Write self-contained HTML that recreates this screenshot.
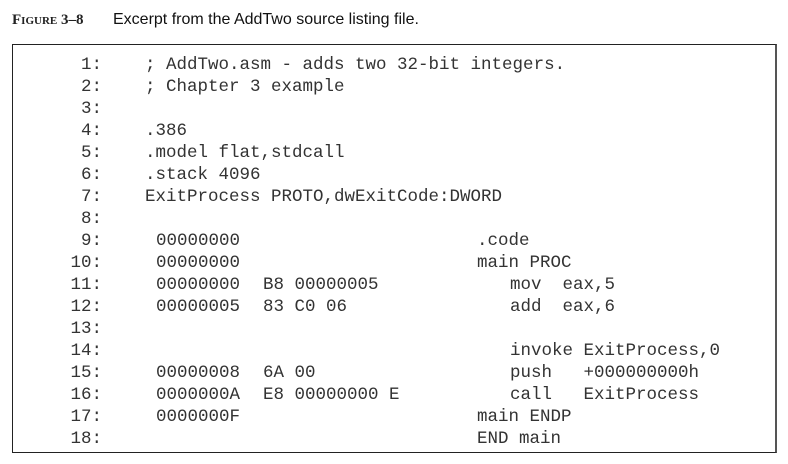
<!DOCTYPE html>
<html><head><meta charset="utf-8"><style>
body{margin:0;width:788px;height:464px;background:#fff;position:relative;overflow:hidden}
.t{position:absolute;top:12px;left:12px;font-family:"Liberation Serif",serif;font-weight:bold;font-size:15px;color:#222}
.t .s{font-size:11px}
.c{position:absolute;top:11px;left:113px;font-family:"Liberation Sans",sans-serif;font-size:16px;color:#111}
.box{position:absolute;left:12px;top:44px;width:765px;height:409px;border:1px solid #222;border-right:2px solid #555;box-sizing:border-box}
.l{position:absolute;font-family:"Liberation Mono",monospace;font-size:17.5px;line-height:22px;color:#333;white-space:pre}
</style></head><body>
<div class="t">F<span class="s">IGURE</span> 3–8</div>
<div class="c">Excerpt from the AddTwo source listing file.</div>
<div class="box"></div>
<div class="l" style="left:58px;top:54px;width:44px;text-align:right"> 1:
 2:
 3:
 4:
 5:
 6:
 7:
 8:
 9:
10:
11:
12:
13:
14:
15:
16:
17:
18:</div>
<div class="l" style="left:145px;top:54px">; AddTwo.asm - adds two 32-bit integers.
; Chapter 3 example

.386
.model flat,stdcall
.stack 4096
ExitProcess PROTO,dwExitCode:DWORD</div>
<div class="l" style="left:156px;top:230px">00000000
00000000
00000000
00000005


00000008
0000000A
0000000F</div>
<div class="l" style="left:263px;top:274px">B8 00000005
83 C0 06


6A 00
E8 00000000 E</div>
<div class="l" style="left:477px;top:230px">.code
main PROC</div>
<div class="l" style="left:510px;top:274px">mov  eax,5
add  eax,6

invoke ExitProcess,0
push   +000000000h
call   ExitProcess</div>
<div class="l" style="left:477px;top:406px">main ENDP
END main</div>
</body></html>
